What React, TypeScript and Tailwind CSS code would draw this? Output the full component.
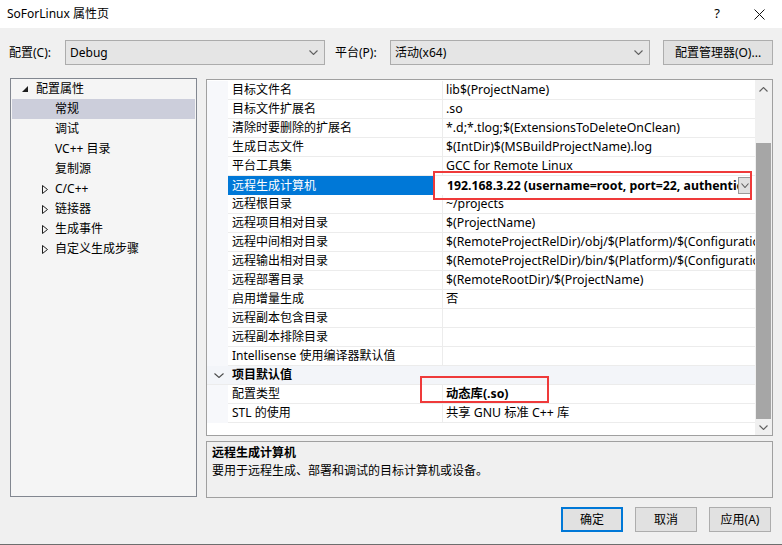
import React from 'react';

type Row = { name: string; value: string; selected?: boolean; bold?: boolean; category?: boolean };

const rows: Row[] = [
  { name: '目标文件名', value: 'lib$(ProjectName)' },
  { name: '目标文件扩展名', value: '.so' },
  { name: '清除时要删除的扩展名', value: '*.d;*.tlog;$(ExtensionsToDeleteOnClean)' },
  { name: '生成日志文件', value: '$(IntDir)$(MSBuildProjectName).log' },
  { name: '平台工具集', value: 'GCC for Remote Linux' },
  { name: '远程生成计算机', value: '192.168.3.22 (username=root, port=22, authentication=Password)', selected: true, bold: true },
  { name: '远程根目录', value: '~/projects' },
  { name: '远程项目相对目录', value: '$(ProjectName)' },
  { name: '远程中间相对目录', value: '$(RemoteProjectRelDir)/obj/$(Platform)/$(Configuration)/' },
  { name: '远程输出相对目录', value: '$(RemoteProjectRelDir)/bin/$(Platform)/$(Configuration)/' },
  { name: '远程部署目录', value: '$(RemoteRootDir)/$(ProjectName)' },
  { name: '启用增量生成', value: '否' },
  { name: '远程副本包含目录', value: '' },
  { name: '远程副本排除目录', value: '' },
  { name: 'Intellisense 使用编译器默认值', value: '' },
  { name: '项目默认值', value: '', category: true },
  { name: '配置类型', value: '动态库(.so)', bold: true },
  { name: 'STL 的使用', value: '共享 GNU 标准 C++ 库' },
];

const tree: { label: string; level: number; expander?: 'open' | 'closed'; selected?: boolean }[] = [
  { label: '配置属性', level: 0, expander: 'open' },
  { label: '常规', level: 1, selected: true },
  { label: '调试', level: 1 },
  { label: 'VC++ 目录', level: 1 },
  { label: '复制源', level: 1 },
  { label: 'C/C++', level: 1, expander: 'closed' },
  { label: '链接器', level: 1, expander: 'closed' },
  { label: '生成事件', level: 1, expander: 'closed' },
  { label: '自定义生成步骤', level: 1, expander: 'closed' },
];

function Chevron({ up = false, color = '#606060', w = 9, h = 5 }: { up?: boolean; color?: string; w?: number; h?: number }) {
  return (
    <svg width={w} height={h} viewBox={`0 0 ${w} ${h}`} className="block">
      <path
        d={up ? `M0.5 ${h - 0.5} L${w / 2} 0.5 L${w - 0.5} ${h - 0.5}` : `M0.5 0.5 L${w / 2} ${h - 0.5} L${w - 0.5} 0.5`}
        fill="none"
        stroke={color}
        strokeWidth="1.1"
      />
    </svg>
  );
}

function Combo({ value }: { value: string }) {
  return (
    <div className="w-[260px] h-[25px] bg-[#e5e5e5] border border-[#acacac] flex items-center pl-[4px] pr-[6px]">
      <span className="flex-1 text-[12px] leading-[23px] text-black">{value}</span>
      <Chevron />
    </div>
  );
}

function Btn({ label, primary = false }: { label: string; primary?: boolean }) {
  return (
    <div
      className={
        primary
          ? 'w-[62px] h-[25px] bg-[#e1e1e1] border-2 border-[#0078d7] flex items-center justify-center text-[12px] leading-[20px] text-black'
          : 'w-[62px] h-[25px] bg-[#e1e1e1] border border-[#adadad] flex items-center justify-center text-[12px] leading-[20px] text-black'
      }
    >
      {label}
    </div>
  );
}

export default function App() {
  return (
    <div className="relative w-[782px] h-[545px] overflow-hidden bg-[#f0f0f0] border-b border-[#6e6e6e] font-['Noto_Sans','Noto_Sans_CJK_SC',sans-serif] text-black">
      {/* Title bar */}
      <div className="h-[28px] bg-white flex items-center pl-[7px]">
        <span className="flex-1 text-[12px] leading-[16px]">SoForLinux 属性页</span>
        <span className="w-[20px] text-center text-[13px] mr-[27px]">?</span>
        <svg width="11" height="11" viewBox="0 0 11 11" className="mr-[17px]">
          <path d="M0.5 0.5 L10.5 10.5 M10.5 0.5 L0.5 10.5" stroke="#111" strokeWidth="1" />
        </svg>
      </div>

      {/* Config row */}
      <div className="flex items-center h-[25px] mt-[12px] pl-[9px]">
        <span className="w-[56px] text-[12px] leading-[16px]">配置(C):</span>
        <Combo value="Debug" />
        <span className="ml-[10px] w-[55px] text-[12px] leading-[16px]">平台(P):</span>
        <Combo value="活动(x64)" />
        <div className="ml-[13px] w-[110px] h-[25px] bg-[#e1e1e1] border border-[#adadad] flex items-center justify-center text-[12px] leading-[16px]">
          配置管理器(O)...
        </div>
      </div>

      {/* Main */}
      <div className="flex mt-[13px] pl-[10px] h-[420px]">
        {/* Tree */}
        <div className="w-[187px] h-[419px] bg-[#f5f5f5] border border-[#828790] flex flex-col">
          {tree.map((t, i) => (
            <div
              key={i}
              className={
                t.selected
                  ? 'h-[20px] mx-[1px] bg-[#cccedb] flex items-center relative'
                  : 'h-[20px] mx-[1px] flex items-center relative'
              }
            >
              {t.expander === 'open' && (
                <svg width="6" height="6" viewBox="0 0 6 6" className="absolute left-[10px] top-[7px]">
                  <path d="M6 0 L6 6 L0 6 Z" fill="#1e1e1e" />
                </svg>
              )}
              {t.expander === 'closed' && (
                <svg width="6" height="9" viewBox="0 0 6 9" className="absolute left-[30px] top-[6px]">
                  <path d="M0.5 0.5 L5.5 4.5 L0.5 8.5 Z" fill="none" stroke="#1e1e1e" strokeWidth="1" />
                </svg>
              )}
              <span className={t.level === 0 ? 'ml-[24px] text-[12px] leading-[16px]' : 'ml-[43px] text-[12px] leading-[16px]'}>
                {t.label}
              </span>
            </div>
          ))}
        </div>

        {/* Right column */}
        <div className="ml-[9px] w-[567px] flex flex-col">
          {/* Property grid */}
          <div className="mt-[1px] h-[357px] bg-white border border-[#a0a0a0] flex overflow-hidden">
            <div className="flex-1 min-w-0 flex flex-col pt-[1px] bg-white overflow-hidden">
              {rows.map((r, i) =>
                r.category ? (
                  <div key={i} className="h-[19px] shrink-0 flex items-center bg-[#f3f5f9] border-b border-[#ececec]">
                    <div className="w-[21px] flex justify-center pl-[2px]">
                      <Chevron color="#4a4a4a" w={10} h={5} />
                    </div>
                    <span className="ml-[4px] text-[12px] leading-[16px] font-bold">{r.name}</span>
                  </div>
                ) : (
                  <div key={i} className="h-[19px] shrink-0 flex">
                    <div className="w-[21px] shrink-0 bg-[#f7f8fb]" />
                    {r.selected ? (
                      <>
                        <div className="w-[206px] shrink-0 bg-[#0078d7] text-white flex items-center pl-[4px] text-[12px] leading-[16px] whitespace-nowrap">
                          {r.name}
                        </div>
                        <div className="flex-1 min-w-0 flex items-center pl-[13px] pr-[3px] bg-white overflow-hidden">
                          <span className="flex-1 min-w-0 overflow-hidden whitespace-nowrap text-[12.3px] leading-[16px] font-bold">{r.value}</span>
                          <div className="w-[14px] h-[17px] bg-[#e0e0e0] border border-[#9a9a9a] flex items-center justify-center shrink-0">
                            <Chevron w={8} h={5} />
                          </div>
                        </div>
                      </>
                    ) : (
                      <>
                        <div className="w-[215px] shrink-0 border-r border-b border-[#ececec] flex items-center pl-[4px] text-[12px] leading-[16px] whitespace-nowrap overflow-hidden">
                          {r.name}
                        </div>
                        <div
                          className={
                            r.bold
                              ? 'flex-1 min-w-0 border-b border-[#ececec] flex items-center pl-[3px] text-[12.3px] leading-[16px] whitespace-nowrap overflow-hidden font-bold'
                              : 'flex-1 min-w-0 border-b border-[#ececec] flex items-center pl-[3px] text-[12.3px] leading-[16px] whitespace-nowrap overflow-hidden'
                          }
                        >
                          {r.value}
                        </div>
                      </>
                    )}
                  </div>
                )
              )}
            </div>
            {/* Scrollbar */}
            <div className="w-[17px] shrink-0 bg-[#f0f0f0] flex flex-col">
              <div className="h-[17px] flex items-center justify-center mt-[1px]">
                <Chevron up color="#606060" w={9} h={5} />
              </div>
              <div className="mt-[45px] mx-[1px] h-[276px] bg-[#a6a6a6]" />
              <div className="flex-1 flex items-center justify-center">
                <Chevron color="#606060" w={9} h={5} />
              </div>
            </div>
          </div>

          {/* Description */}
          <div className="mt-[5px] h-[57px] border border-[#a0a0a0] bg-[#f0f0f0] px-[5px] pt-[2px]">
            <div className="text-[12px] leading-[18px] font-bold">远程生成计算机</div>
            <div className="text-[12px] leading-[18px]">要用于远程生成、部署和调试的目标计算机或设备。</div>
          </div>
        </div>
      </div>

      {/* Buttons */}
      <div className="flex justify-end gap-[12px] mt-[9px] pr-[11px]">
        <Btn label="确定" primary />
        <Btn label="取消" />
        <Btn label="应用(A)" />
      </div>

      {/* Red annotation boxes */}
      <div className="absolute left-[433px] top-[171px] w-[319px] h-[29px] border-2 border-[#ef3a3a] pointer-events-none" />
      <div className="absolute left-[420px] top-[376px] w-[129px] h-[27px] border-2 border-[#ef3a3a] pointer-events-none" />
    </div>
  );
}
